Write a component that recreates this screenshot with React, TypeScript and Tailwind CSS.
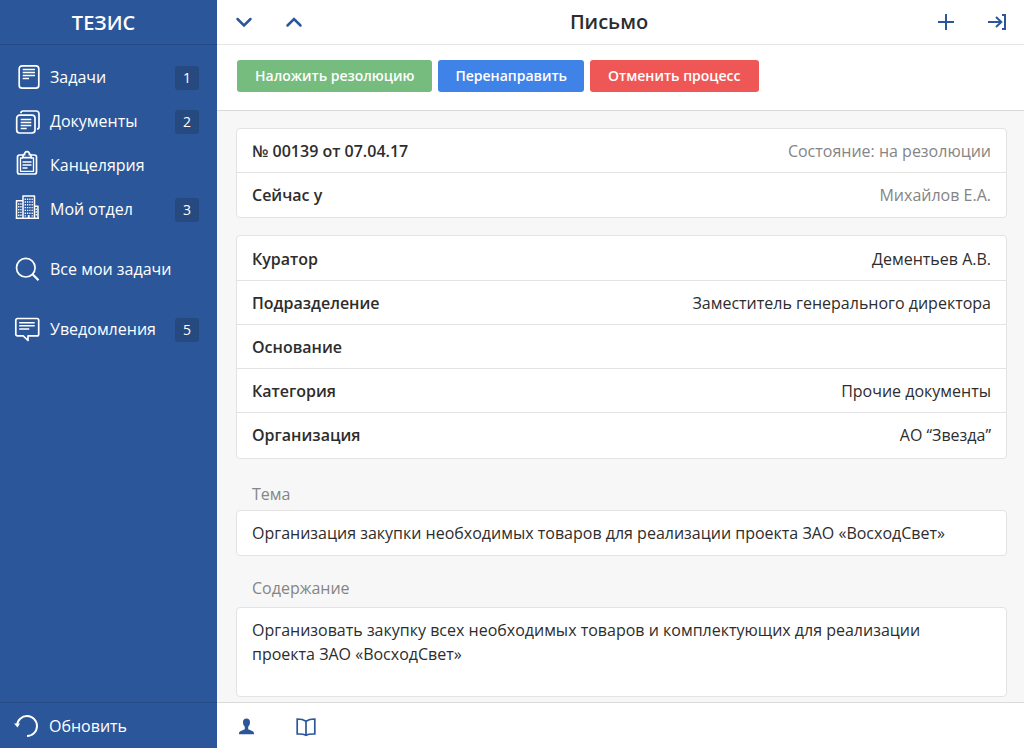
import type { ReactNode } from 'react'

interface NavEntry {
  label: string
  icon: ReactNode
  count?: number
}

function SideIcon({ children, width = 1.5 }: { children: ReactNode; width?: number }) {
  return (
    <svg
      viewBox="0 0 26 26"
      className="size-[26px] shrink-0 overflow-visible"
      fill="none"
      stroke="currentColor"
      strokeWidth={width}
      strokeLinejoin="round"
      aria-hidden="true"
    >
      {children}
    </svg>
  )
}

const taskIcon = (
  <SideIcon width={1.7}>
    <rect x="4.2" y="1.8" width="19.6" height="22.4" rx="3" />
    <path d="M7.7 5.5h12.300M7.7 8.5h12.300M7.7 11.5h12.300M7.7 14.5h6.300" strokeWidth="1.5" />
  </SideIcon>
)

const documentsIcon = (
  <SideIcon width={1.7}>
    <rect x="1.7" y="7.2" width="18.3" height="17.8" rx="3" />
    <path d="M6 5.2V5a2 2 0 0 1 2-2h13a3 3 0 0 1 3 3v13a2 2 0 0 1-2 2" />
    <path d="M5.7 11.5h10.600M5.7 14.5h10.600M5.7 17.5h10.600M5.7 20.5h6" strokeWidth="1.5" />
  </SideIcon>
)

const clipboardIcon = (
  <SideIcon width={1.7}>
    <path d="M7.5 3H4.5a2 2 0 0 0-2 2v15a2 2 0 0 0 2 2h15a2 2 0 0 0 2-2V5a2 2 0 0 0-2-2h-3" />
    <path d="M8 5.7V2.7h1.700a2.400 2.400 0 1 1 4.600 0H16v3z" />
    <path d="M8 6H5.5v13.300h13V6H16" strokeWidth="1.3" />
    <path d="M7.5 10h9M7.5 13h9M7.5 16h5" strokeWidth="1.4" />
  </SideIcon>
)

const buildingIcon = (
  <SideIcon width={1.5}>
    <path d="M8 22.300V0h11.500v22.300M8 4.700H1.500v17.600H23V10.300h-3.500M.7 22.300h23.300" />
    <path d="M3.700 7.300v13.500M5.900 7.300v13.500" strokeWidth="1.3" strokeDasharray="1.4 1.4" />
    <path d="M10.300 2.500v18M12.600 2.500v16M14.900 2.500v16M17.200 2.500v18" strokeWidth="1.3" strokeDasharray="1.4 1.4" />
    <path d="M21.300 12.500v8.500" strokeWidth="1.3" strokeDasharray="1.4 1.4" />
    <path d="M13.700 19v3.500" strokeWidth="1.8" />
  </SideIcon>
)

const searchIcon = (
  <SideIcon width={1.7}>
    <circle cx="10.8" cy="11.7" r="9.3" />
    <path d="M17.300 18l6.200 6.200" strokeWidth="2.2" />
  </SideIcon>
)

const messageIcon = (
  <SideIcon width={1.7}>
    <path d="M2.500 2.500h19.500a1.700 1.700 0 0 1 1.700 1.700v14a1.700 1.700 0 0 1-1.700 1.700H13v4.600l-4.800-4.600H2.500a1.700 1.700 0 0 1-1.700-1.700v-14a1.700 1.700 0 0 1 1.700-1.700z" />
    <path d="M4.200 6.700h15.500M4.200 9.700h15.500M4.200 12.900h10" strokeWidth="1.5" />
  </SideIcon>
)

const refreshIcon = (
  <SideIcon width={2}>
    <path d="M2 12.500A10 10 0 1 1 12 23" />
    <path d="M-1 10.500h6l-2.500 4z" fill="currentColor" stroke="none" />
  </SideIcon>
)

const navGroups: NavEntry[][] = [
  [
    { label: 'Задачи', icon: taskIcon, count: 1 },
    { label: 'Документы', icon: documentsIcon, count: 2 },
    { label: 'Канцелярия', icon: clipboardIcon },
    { label: 'Мой отдел', icon: buildingIcon, count: 3 },
  ],
  [{ label: 'Все мои задачи', icon: searchIcon }],
  [{ label: 'Уведомления', icon: messageIcon, count: 5 }],
]

const statusRows = [
  { label: '№ 00139 от 07.04.17', value: 'Состояние: на резолюции' },
  { label: 'Сейчас у', value: 'Михайлов Е.А.' },
]

const detailRows = [
  { label: 'Куратор', value: 'Дементьев А.В.' },
  { label: 'Подразделение', value: 'Заместитель генерального директора' },
  { label: 'Основание', value: '' },
  { label: 'Категория', value: 'Прочие документы' },
  { label: 'Организация', value: 'АО “Звезда”' },
]

function Sidebar() {
  return (
    <aside className="flex w-[217px] shrink-0 flex-col bg-[#2b579a] text-white">
      <div className="flex h-[45px] items-center justify-center border-b border-[#244b86] pt-0.5 pr-2.5 text-xl font-semibold">
        ТЕЗИС
      </div>
      <nav className="flex flex-1 flex-col gap-4 pt-2.5">
        {navGroups.map((group, i) => (
          <ul key={i}>
            {group.map((entry) => (
              <li key={entry.label}>
                <a href="#" className="flex h-11 items-center gap-[9px] pr-[18px] pl-[15px]">
                  {entry.icon}
                  <span className="flex-1 whitespace-nowrap">{entry.label}</span>
                  {entry.count && (
                    <span className="mt-0.5 flex size-6 items-center justify-center rounded-[3px] bg-[#264a7f] text-sm">
                      {entry.count}
                    </span>
                  )}
                </a>
              </li>
            ))}
          </ul>
        ))}
      </nav>
      <button
        type="button"
        className="flex h-[46px] items-center gap-2 border-t border-[#244b86] pl-[15px] text-left"
      >
        {refreshIcon}
        Обновить
      </button>
    </aside>
  )
}

function TopBar() {
  return (
    <header className="flex h-[45px] shrink-0 items-center border-b border-[#e5e5e5] px-[18px] text-[#2b579a]">
      <div className="flex flex-1 gap-8">
        <button type="button" aria-label="Следующий">
          <svg viewBox="0 0 18 18" className="size-[18px]" fill="none" stroke="currentColor" strokeWidth="2.5" strokeLinecap="round">
            <path d="M2.500 6l6.500 6.500L15.500 6" />
          </svg>
        </button>
        <button type="button" aria-label="Предыдущий">
          <svg viewBox="0 0 18 18" className="size-[18px]" fill="none" stroke="currentColor" strokeWidth="2.5" strokeLinecap="round">
            <path d="M2.500 12.500L9 6l6.500 6.500" />
          </svg>
        </button>
      </div>
      <h1 className="pr-[23px] text-xl font-semibold text-[#2d2d2d]">Письмо</h1>
      <div className="flex flex-1 justify-end gap-[33px]">
        <button type="button" aria-label="Создать">
          <svg viewBox="0 0 18 18" className="size-[18px]" fill="none" stroke="currentColor" strokeWidth="2">
            <path d="M9 1v16M1 9h16" />
          </svg>
        </button>
        <button type="button" aria-label="Выйти">
          <svg viewBox="0 0 18 18" className="size-[18px]" fill="none" stroke="currentColor" strokeWidth="2">
            <path d="M0 9h13M8 4l5.300 5L8 14M14 2h3v14h-3" />
          </svg>
        </button>
      </div>
    </header>
  )
}

function InfoCard({ rows, muted }: { rows: { label: string; value: string }[]; muted?: boolean }) {
  return (
    <dl className={`rounded border border-[#e3e3e3] bg-white ${muted ? '' : 'py-px'}`}>
      {rows.map((row) => (
        <div
          key={row.label}
          className="flex h-11 items-center justify-between border-b border-[#e3e3e3] px-[15px] last:border-b-0"
        >
          <dt className="font-semibold">{row.label}</dt>
          <dd className={muted ? 'text-[#858585]' : ''}>{row.value}</dd>
        </div>
      ))}
    </dl>
  )
}

export default function App() {
  return (
    <div className="flex h-screen font-['Open_Sans','Noto_Sans',sans-serif] text-base text-[#2d2d2d]">
      <Sidebar />
      <div className="flex min-w-0 flex-1 flex-col bg-white">
        <TopBar />
        <div className="flex h-[66px] shrink-0 items-start gap-1.5 border-b border-[#d9d9d9] px-5 pt-[15px] text-sm font-semibold text-white">
          <button type="button" className="h-8 rounded-[3px] bg-[#75bc7e] px-[18px]">
            Наложить резолюцию
          </button>
          <button type="button" className="h-8 rounded-[3px] bg-[#4083e8] px-[17px]">
            Перенаправить
          </button>
          <button type="button" className="h-8 rounded-[3px] bg-[#ef5757] px-[18px]">
            Отменить процесс
          </button>
        </div>
        <main className="min-h-0 flex-1 overflow-auto bg-[#f7f7f7] pt-[17px] pr-[17px] pb-[5px] pl-[19px]">
          <InfoCard rows={statusRows} muted />
          <div className="mt-[17px]">
            <InfoCard rows={detailRows} />
          </div>
          <section>
            <h2 className="mt-[23px] px-4 leading-6 text-[#858585]">Тема</h2>
            <p className="mt-1 rounded border border-[#e3e3e3] bg-white px-[15px] py-2.5 leading-6">
              Организация закупки необходимых товаров для реализации проекта ЗАО «ВосходСвет»
            </p>
          </section>
          <section>
            <h2 className="mt-5 px-4 leading-6 text-[#858585]">Содержание</h2>
            <p className="mt-[7px] min-h-[90px] rounded border border-[#e3e3e3] bg-white py-2.5 pr-[60px] pl-[15px] leading-6">
              Организовать закупку всех необходимых товаров и комплектующих для реализации проекта ЗАО
              «ВосходСвет»
            </p>
          </section>
        </main>
        <footer className="flex h-[46px] shrink-0 items-center gap-10 border-t border-[#d9d9d9] px-[19px] pt-0.5 text-[#2b579a]">
          <button type="button" aria-label="Профиль">
            <svg viewBox="0 0 20 20" className="size-5" fill="currentColor">
              <path d="M10.500 1.500C8.300 1.500 7 2.900 7 5c0 1.900.6 3.700 1.800 4.800v2.500L4.800 14C3.500 14.500 3 15.200 3 16.500V17.300h15v-.8c0-1.300-.5-2-1.800-2.500l-4-1.700V9.800C13.400 8.700 14 6.900 14 5c0-2.100-1.300-3.500-3.500-3.500z" />
            </svg>
          </button>
          <button type="button" aria-label="Справочник">
            <svg viewBox="0 0 20 20" className="size-5" fill="none" stroke="currentColor" strokeWidth="1.7">
              <path d="M1.200 2c3.500 0 6.300.5 8.800 2.300 2.500-1.800 5.300-2.300 8.800-2.300v15c-3.500 0-6.300-.2-8.800 1.300-2.500-1.500-5.300-1.300-8.800-1.300zM10 4.300v14" />
            </svg>
          </button>
        </footer>
      </div>
    </div>
  )
}
